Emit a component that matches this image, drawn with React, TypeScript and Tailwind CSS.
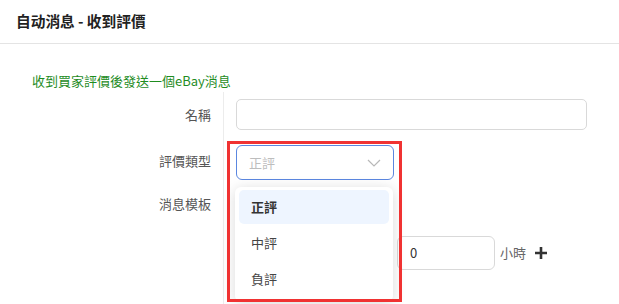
import React from 'react';

const font = { fontFamily: '"Noto Sans CJK TC", "Noto Sans", sans-serif' };

const Chevron = () => (
	<svg width="14" height="8" viewBox="0 0 14 8" fill="none" className="text-[#b8b8b8]">
		<path d="M1 1l6 6 6-6" stroke="currentColor" strokeWidth="1.2" />
	</svg>
);

const Plus = () => (
	<svg width="12" height="12" viewBox="0 0 12 12">
		<path d="M6 0v12M0 6h12" stroke="#333" strokeWidth="2.6" />
	</svg>
);

export default function App() {
	const options = ['正評', '中評', '負評'];

	return (
		<div className="relative h-[304px] w-[619px] overflow-hidden bg-white text-[13px] text-[#333]" style={font}>
			<div className="flex h-[44px] items-center border-b border-[#e4e4e4] px-4">
				<h1 className="text-[14.7px] font-bold text-[#222]">自动消息 - 收到評價</h1>
			</div>

			<div className="pl-8 pt-[29px] leading-[16px] text-[#1f8c1f]">收到買家評價後發送一個eBay消息</div>

			<div className="mt-[3px] flex">
				<div className="w-[223px] shrink-0 pr-3 text-right text-[#555]">
					<div className="mt-[7px] flex h-[31px] items-center justify-end">名稱</div>
					<div className="mt-[13px] flex h-[35px] items-center justify-end">評價類型</div>
					<div className="mt-[12px] flex h-[28px] items-center justify-end">消息模板</div>
				</div>

				<div className="h-[212px] flex-1 border-l border-[#ececec] pl-3">
					<div className="mt-[7px] h-[31px] w-[351px] rounded-[5px] border border-[#d9d9d9]" />
					<div className="mt-[15px] flex h-[35px] w-[158px] items-center justify-between rounded-[6px] border border-[#5b87e0] pl-3 pr-3 text-[#bdbdbd]">
						<span>正評</span>
						<Chevron />
					</div>
					<div className="mt-[56px] flex items-center">
						<div className="h-[34px] w-[158px]" />
						<div className="ml-[3px] flex h-[34px] w-[98px] items-center rounded-[6px] border border-[#d9d9d9] pl-3 text-[#333]">
							0
						</div>
						<span className="ml-[5px] text-[#666]">小時</span>
						<span className="ml-[9px]">
							<Plus />
						</span>
					</div>
				</div>
			</div>

			<div className="absolute left-[235px] top-[187px] w-[158px] rounded-[6px] bg-white px-1 pb-[6px] pt-[3px] shadow-[0_2px_14px_rgba(0,0,0,0.15)]">
				{options.map((option, i) => (
					<div
						key={option}
						className={`flex h-[34px] items-center rounded-[5px] px-3 ${i > 0 ? 'mt-[2px]' : ''} ${i === 0 ? 'bg-[#eef5ff] font-bold text-[#333]' : 'text-[#444]'}`}
					>
						{option}
					</div>
				))}
			</div>

			<div className="absolute left-[227px] top-[141px] h-[161px] w-[175px] border-[3px] border-[#f03232]" />
		</div>
	);
}
